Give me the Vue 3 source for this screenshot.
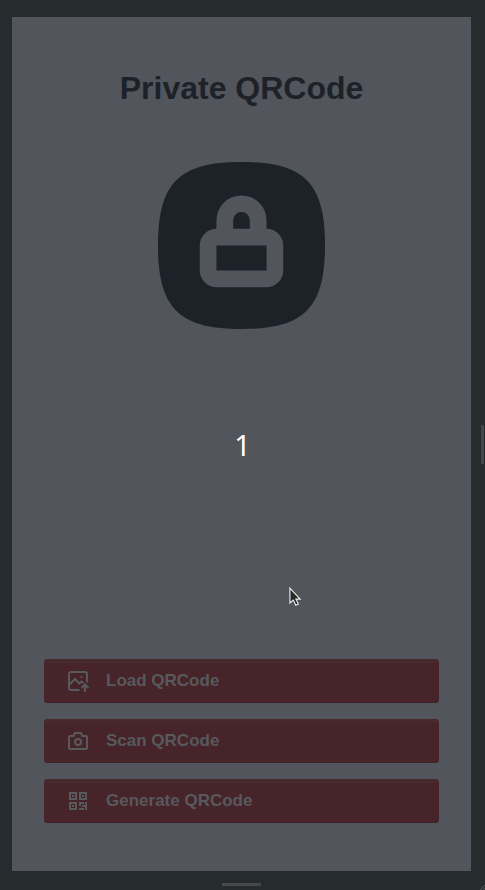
<script setup>
const actions = [
  { label: 'Load QRCode', icon: 'load' },
  { label: 'Scan QRCode', icon: 'scan' },
  { label: 'Generate QRCode', icon: 'generate' },
]
</script>

<template>
  <div class="page">
    <main class="panel">
      <h1>Private QRCode</h1>
      <svg class="logo" viewBox="0 0 20 20">
        <path class="dark" d="M0 10C0 2.5 2.5 0 10 0S20 2.5 20 10 17.5 20 10 20 0 17.5 0 10Z" />
        <path class="light" fill-rule="evenodd" d="M7 8V7a3 3 0 0 1 6 0v1a2 2 0 0 1 2 2v3a2 2 0 0 1-2 2H7a2 2 0 0 1-2-2v-3a2 2 0 0 1 2-2ZM9 8V7a1 1 0 0 1 2 0v1ZM7 10v3h6v-3Z" />
      </svg>
      <div class="actions">
        <button v-for="a in actions" :key="a.label" type="button">
          <svg v-if="a.icon === 'load'" class="icon" viewBox="0 0 24 24">
            <path d="M13.500 21H5a2 2 0 0 1-2-2V5a2 2 0 0 1 2-2h14a2 2 0 0 1 2 2v8.500M3 16l6-6 4.500 4.500 2-2 2 1.500M19 23v-7M15.500 19l3.500-3.500 3.500 3.500" />
            <circle class="fill" cx="15.300" cy="8" r="1.100" />
          </svg>
          <svg v-else-if="a.icon === 'scan'" class="icon" viewBox="0 0 24 24">
            <path d="M4 7h3.500l1.500-3h6l1.500 3H20a1 1 0 0 1 1 1v11a1 1 0 0 1-1 1H4a1 1 0 0 1-1-1V8a1 1 0 0 1 1-1Z" />
            <circle cx="12" cy="13" r="3" />
          </svg>
          <svg v-else class="icon" viewBox="0 0 24 24">
            <path d="M4 4h6v6H4ZM14 4h6v6h-6ZM4 14h6v6H4Z" />
            <path class="fill" d="M6 6h2v2H6ZM16 6h2v2h-2ZM6 16h2v2H6ZM13 13h5v2h-3v2h-2ZM19 13h2v3h-2ZM16 16h5v5h-2v-3h-3ZM13 19h5v2h-5Z" />
          </svg>
          <span>{{ a.label }}</span>
        </button>
      </div>
    </main>
    <i class="handle right"></i>
    <i class="handle bottom"></i>
    <svg class="corner" viewBox="0 0 5 5"><path d="M0 5 5 0M3 5l2-2" /></svg>
    <div class="count">1</div>
    <svg class="cursor" viewBox="0 0 14 21">
      <path d="M1 1v16l3.600-3.200 2.800 5.600 2.700-1.300-2.700-5.300H12Z" />
    </svg>
  </div>
</template>

<style>
body {
  margin: 0;
  background: #262a2e;
}
</style>

<style scoped>
.page {
  position: relative;
  box-sizing: border-box;
  width: 485px;
  height: 890px;
  padding: 17px 14px 19px 12px;
  background: #262b2e;
  overflow: hidden;
  font-family: "Liberation Sans", Arial, sans-serif;
}
.panel {
  display: flex;
  flex-direction: column;
  align-items: center;
  box-sizing: border-box;
  height: 854px;
  padding: 53px 32px 48px;
  background: #52555c;
}
h1 {
  margin: 0;
  font-size: 32px;
  line-height: 36px;
  color: #1d2128;
}
.logo {
  width: 167px;
  height: 167px;
  margin-top: 55.5px;
}
.dark {
  fill: #1d2128;
}
.light {
  fill: #52555c;
}
.actions {
  display: flex;
  flex-direction: column;
  gap: 16px;
  width: 100%;
  margin-top: auto;
}
button {
  display: flex;
  align-items: center;
  gap: 16px;
  box-sizing: border-box;
  width: 100%;
  height: 44px;
  padding: 0 22px;
  border: 0;
  border-radius: 4px;
  background: #46242a;
  box-shadow: inset 0 4px #48292e, inset 0 -1px #3d2428;
  color: #57595d;
  font: bold 17px/20px "Liberation Sans", Arial, sans-serif;
}
button span {
  margin-top: -1px;
}
.icon {
  width: 24px;
  height: 24px;
  fill: none;
  stroke: #57595d;
  stroke-width: 2;
}
.icon .fill {
  fill: #57595d;
  stroke: none;
}
.handle {
  position: absolute;
  background: #47484a;
}
.right {
  left: 481px;
  top: 425px;
  width: 3px;
  height: 39px;
}
.bottom {
  left: 222px;
  top: 883px;
  width: 39px;
  height: 3px;
}
.corner {
  position: absolute;
  right: 0;
  bottom: 0;
  width: 5px;
  height: 5px;
  stroke: #55585b;
  fill: none;
}
.count {
  position: absolute;
  left: 0;
  top: 425px;
  width: 485px;
  text-align: center;
  font: 29px/40px "Noto Sans", sans-serif;
  color: #fff;
}
.cursor {
  position: absolute;
  left: 289px;
  top: 587px;
  width: 13px;
  height: 20px;
  fill: #292929;
  stroke: #eee;
  stroke-width: 1.2;
}
</style>
